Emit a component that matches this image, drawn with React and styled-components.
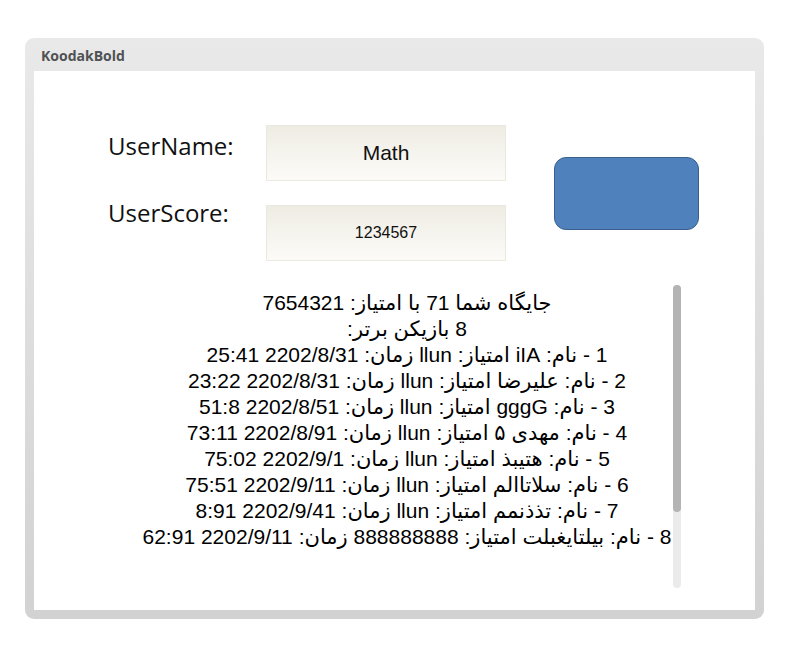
import styled, { createGlobalStyle } from "styled-components";

const GlobalStyle = createGlobalStyle`
  body {
    margin: 0;
    background: #ffffff;
    font-family: "Liberation Sans", Arial, sans-serif;
  }
`;

const ranks = [
  "1 - نام: iIA امتیاز: llun زمان: 2202/8/31 25:41",
  "2 - نام: علیرضا امتیاز: llun زمان: 2202/8/31 23:22",
  "3 - نام: gggG امتیاز: llun زمان: 2202/8/51 51:8",
  "4 - نام: مهدی ۵ امتیاز: llun زمان: 2202/8/91 73:11",
  "5 - نام: هتیبذ امتیاز: llun زمان: 2202/9/1 75:02",
  "6 - نام: سلاتاالم امتیاز: llun زمان: 2202/9/11 75:51",
  "7 - نام: تذذنمم امتیاز: llun زمان: 2202/9/41 8:91",
  "8 - نام: بیلتایغبلت امتیاز: 888888888 زمان: 2202/9/11 62:91",
];

function App() {
  return (
    <>
      <GlobalStyle />
      <Frame>
        <TitleBar>KoodakBold</TitleBar>
        <Content>
          <FormRow>
            <Fields>
              <Label $offset={4}>UserName:</Label>
              <Field $size={21}>Math</Field>
              <Label $offset={-9}>UserScore:</Label>
              <Field $size={16}>1234567</Field>
            </Fields>
            <BlueButton />
          </FormRow>
          <Board>
            <BoardText>
              <Line>جایگاه شما 71 با امتیاز: 7654321</Line>
              <Line>8 بازیکن برتر:</Line>
              {ranks.map((r) => (
                <Line key={r}>{r}</Line>
              ))}
            </BoardText>
            <ScrollTrack>
              <ScrollThumb style={{ height: `${(303 * 303) / 404}px` }} />
            </ScrollTrack>
          </Board>
        </Content>
      </Frame>
    </>
  );
}

const Frame = styled.div`
  box-sizing: border-box;
  margin: 38px 0 0 25px;
  width: 739px;
  height: 581px;
  border-radius: 9px;
  background: linear-gradient(#e9e9e9, #d2d2d2);
  display: flex;
  flex-direction: column;
`;

const TitleBar = styled.div`
  box-sizing: border-box;
  height: 33px;
  padding: 8px 0 0 16px;
  font-family: "Open Sans", sans-serif;
  font-weight: 700;
  font-size: 14px;
  line-height: 19px;
  color: #505254;
`;

const Content = styled.div`
  flex: 1;
  margin: 0 9px 9px;
  background: #ffffff;
  display: flex;
  flex-direction: column;
`;

const FormRow = styled.div`
  margin-top: 54px;
  padding-left: 74px;
  display: flex;
  align-items: center;
`;

const Fields = styled.div`
  display: grid;
  grid-template-columns: 158px 240px;
  grid-auto-rows: 56px;
  row-gap: 24px;
`;

const Label = styled.div`
  margin-top: ${(p) => p.$offset}px;
  font-family: "Open Sans", sans-serif;
  font-size: 24px;
  color: #111111;
`;

const Field = styled.div`
  box-sizing: border-box;
  display: flex;
  align-items: center;
  justify-content: center;
  border: 1px solid #ebe9de;
  background: linear-gradient(#eeece3, #fcfbf8);
  font-size: ${(p) => p.$size}px;
  color: #111111;
`;

const BlueButton = styled.div`
  box-sizing: border-box;
  margin-left: 48px;
  width: 145px;
  height: 73px;
  border-radius: 12px;
  background: #4f81bd;
  border: 1px solid #3a5f8c;
`;

const Board = styled.div`
  margin: 24px 0 0 107px;
  width: 540px;
  height: 303px;
  display: flex;
`;

const BoardText = styled.div`
  flex: 1;
  min-width: 0;
  padding-top: 5px;
`;

const ScrollTrack = styled.div`
  width: 8px;
  height: 100%;
  border-radius: 4px;
  background: #ebebeb;
`;

const ScrollThumb = styled.div`
  width: 100%;
  border-radius: 4px;
  background: #b4b4b4;
`;

const Line = styled.div`
  direction: rtl;
  text-align: center;
  font-family: "Liberation Sans", "DejaVu Sans", sans-serif;
  font-size: 21px;
  line-height: 26px;
  color: #000000;
  white-space: nowrap;
`;

export default App;
